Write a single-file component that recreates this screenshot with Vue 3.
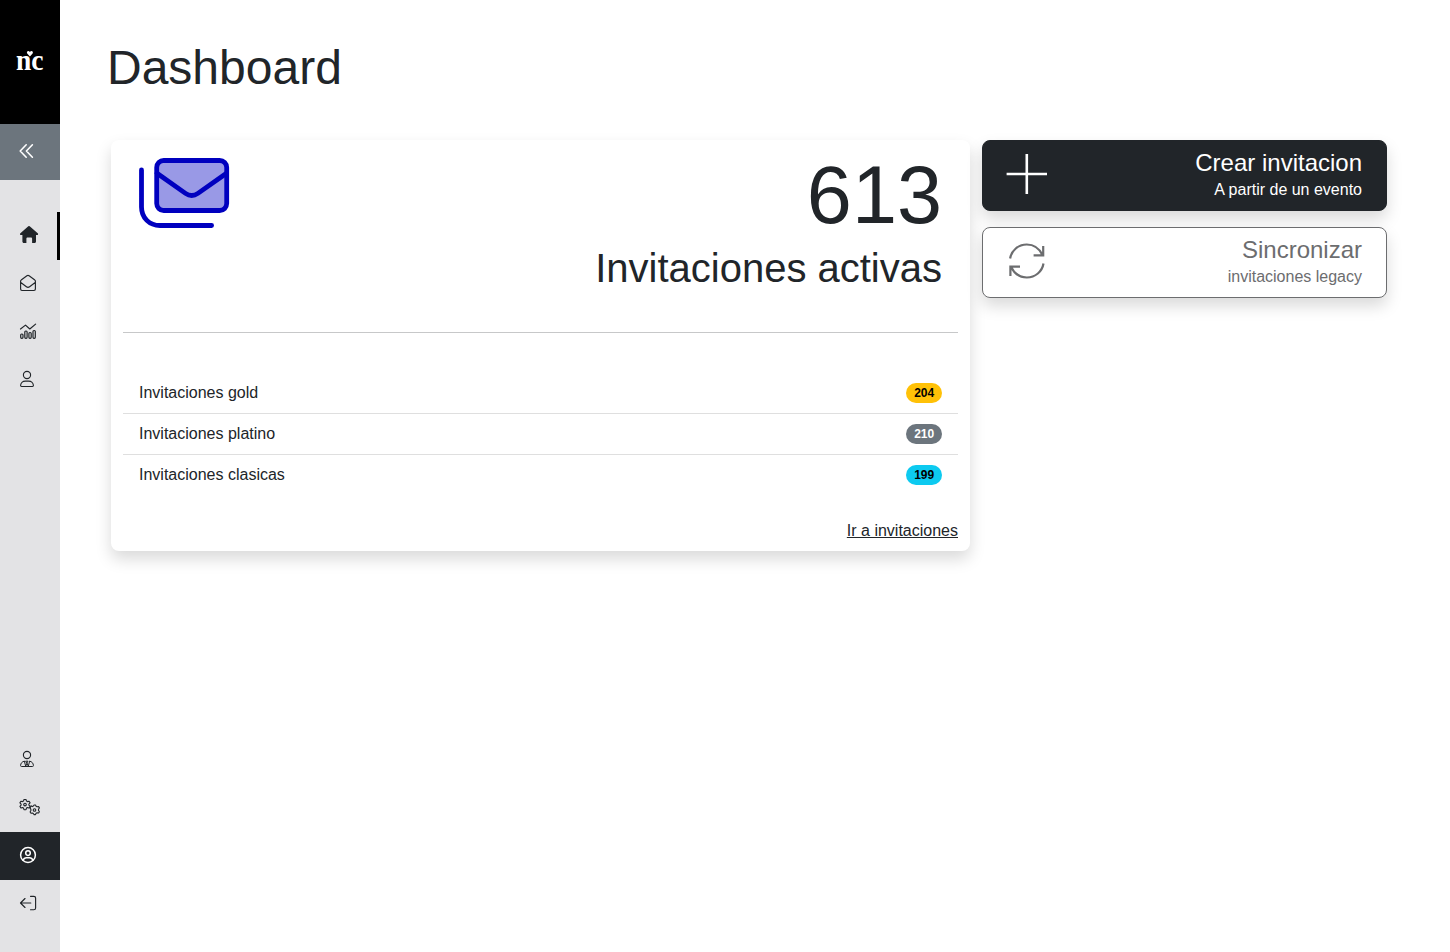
<script setup>
const plans = [
  { name: 'Invitaciones gold', count: 204, tone: 'gold' },
  { name: 'Invitaciones platino', count: 210, tone: 'platinum' },
  { name: 'Invitaciones clasicas', count: 199, tone: 'classic' },
]
</script>

<template>
  <div class="layout">
    <aside class="sidebar">
      <div class="logo">
        <svg width="60" height="124" viewBox="0 0 60 124">
          <text x="16" y="70" textLength="27.5" lengthAdjust="spacingAndGlyphs">nc</text>
          <path d="M29.900 56.400 L27.200 53.600 C26 51.200 28.600 50 29.900 51.900 C31.200 50 33.800 51.200 32.600 53.600 Z" />
        </svg>
      </div>
      <button class="toggle" aria-label="Contraer">
        <svg class="icon" viewBox="0 0 24 24" stroke-width="1.6"><path d="M10.200 4.800 4.200 11l6 6.200M16.400 4.800 10.400 11l6 6.200" /></svg>
      </button>
      <nav class="menu">
        <a class="item current">
          <svg class="icon solid" viewBox="0 0 24 24"><path d="M12.300 3.200a1.100 1.100 0 0 1 1.400 0l8 7c.8.7.4 1.900-.7 1.900h-1v6.400c0 .9-.6 1.500-1.500 1.500h-2.400v-4.400c0-.7-.5-1.200-1.200-1.200h-3.300c-.7 0-1.200.5-1.200 1.200V20H7.900c-.9 0-1.500-.6-1.500-1.500v-6.400h-1.300c-1.100 0-1.500-1.200-.7-1.900z" /></svg>
        </a>
        <a class="item">
          <svg class="icon" viewBox="0 0 24 24"><path d="M4.600 10.200q0-.8.6-1.200l5.700-4.200q1.100-.8 2.200 0L18.800 9q.6.400.6 1.200v7.900q0 1.400-1.400 1.400H6q-1.400 0-1.400-1.400zM4.800 11.500l5.600 4.200q1.600 1.200 3.200 0l5.600-4.200" /></svg>
        </a>
        <a class="item">
          <svg class="icon chart" viewBox="0 0 24 24"><path d="m4.500 10 5-3.900 4.300 3.900 5.800-4.900" /><rect x="4.700" y="15" width="2.300" height="4.300" rx="1" /><rect x="8.800" y="12" width="2.300" height="7.300" rx="1" /><rect x="12.900" y="13.500" width="2.300" height="5.800" rx="1" /><rect x="17" y="11.500" width="2.300" height="7.800" rx="1" /></svg>
        </a>
        <a class="item">
          <svg class="icon" viewBox="0 0 24 24"><circle cx="11" cy="8" r="3.600" /><path d="M4.600 18.600c0-2.700 2.100-4.500 4.800-4.500h3.200c2.700 0 4.800 1.800 4.800 4.500q0 .9-.9.900h-11q-.9 0-.9-.9z" /></svg>
        </a>
      </nav>
      <nav class="menu bottom">
        <a class="item">
          <svg class="icon" viewBox="0 0 24 24"><circle cx="11" cy="8" r="3.600" /><path d="M8.200 14.200c-2.100.3-3.600 2.100-3.600 4.400q0 .9.900.9h11q.9 0 .9-.9c0-2.300-1.500-4.100-3.600-4.400M8.400 14.400l1.300 4.800 1.300-3 1.300 3 1.300-4.800M10 14.200h2l-1 1.600z" stroke-width="1" /></svg>
        </a>
        <a class="item">
          <svg class="icon gears" viewBox="0 0 24 24">
            <path d="M8 4.500h2l.5 1.600 1 .5 1.600-.4 1 1.700-1.200 1.200v1l1.200 1.200-1 1.700-1.600-.4-1 .5-.5 1.600H8l-.5-1.600-1-.5-1.600.4-1-1.700L5.100 10.100v-1L3.900 7.900l1-1.700 1.600.4 1-.5z" /><circle cx="9" cy="9.600" r="1.300" />
            <path d="M15.500 10.900l1.300.9 1-.5.800-1.100h1.400l.6 1.300 1 .5 1.500-.2.800 1.300-.9 1.300v1.200l.9 1.300-.8 1.300-1.500-.2-1 .5-.6 1.300h-1.400l-.8-1.100-1-.5-1.300.3-.9-1.300.8-1.400v-1.200l-.8-1.300z" transform="translate(-.5 -.2)" /><circle cx="18.500" cy="15" r="1.300" />
          </svg>
        </a>
        <a class="item account">
          <svg class="icon" viewBox="0 0 24 24"><circle cx="12" cy="12" r="7.400" /><circle cx="12" cy="10.100" r="2.300" /><path d="M7.100 17.200c.6-1.700 1.800-2.500 3.400-2.500h3c1.600 0 2.800.8 3.400 2.500" /></svg>
        </a>
        <a class="item">
          <svg class="icon" viewBox="0 0 24 24"><path d="M14.800 12H4.800M9 7.500 4.500 12 9 16.500M14.500 5.300h3.300q1.800 0 1.800 1.800v9.800q0 1.800-1.800 1.800h-3.300" /></svg>
        </a>
      </nav>
    </aside>

    <main class="page">
      <h1>Dashboard</h1>
      <div class="columns">
        <section class="card">
          <header class="summary">
            <svg class="envelopes" width="92" height="72" viewBox="138 157 92 72">
              <rect x="156.700" y="160.500" width="70" height="50" rx="7" />
              <path d="m157 173.200 28.500 20.200q6.200 4.300 12.400 0L226.500 173.200M141.500 170v37c0 11 8 18.500 18.500 18.500h51.600" />
            </svg>
            <div class="figures">
              <div class="total">613</div>
              <div class="caption">Invitaciones activas</div>
            </div>
          </header>
          <hr />
          <ul>
            <li v-for="plan in plans" :key="plan.name">
              <span>{{ plan.name }}</span>
              <span class="badge" :class="plan.tone">{{ plan.count }}</span>
            </li>
          </ul>
          <a class="more">Ir a invitaciones</a>
        </section>
        <div class="actions">
          <button class="action dark">
            <svg width="42" height="42" viewBox="0 0 42 42" stroke-width="2.600"><path d="M20.800 1v40M.6 21h40.400" /></svg>
            <span class="label"><span class="title">Crear invitacion</span><span>A partir de un evento</span></span>
          </button>
          <button class="action outline">
            <svg width="42" height="42" viewBox="0 0 42 42" stroke-width="2.200"><path d="M4.100 18.500C5.400 10.500 12.300 4.500 20.800 4.500c7 0 12.500 4 15.700 10.500M37.200 6v9.400h-9.600M37.500 23.500C36.200 31.500 29.300 37.500 20.800 37.500c-7 0-12.500-4-15.700-10.500M4.400 36v-9.400h9.600" /></svg>
            <span class="label"><span class="title">Sincronizar</span><span>invitaciones legacy</span></span>
          </button>
        </div>
      </div>
    </main>
  </div>
</template>

<style>
body { background: #fff; }
</style>

<style scoped>
* { box-sizing: border-box; }
.layout {
  display: flex;
  height: 952px;
  overflow: hidden;
  font: 16px/24px "Liberation Sans", Arial, sans-serif;
  color: #212529;
}
.sidebar { width: 60px; flex: none; display: flex; flex-direction: column; background: #e3e3e5; padding-bottom: 24px; }
.logo { height: 124px; background: #000; }
.logo svg { display: block; }
.logo text { font: bold 29px "Liberation Serif", serif; fill: #fff; }
.logo path { fill: #fff; }
.toggle { height: 56px; border: 0; background: #6c757d; color: #fff; padding: 0 0 0 16px; text-align: left; }
.icon { display: block; width: 24px; height: 24px; fill: none; stroke: currentColor; stroke-linecap: round; stroke-linejoin: round; overflow: visible; }
.item .icon { stroke-width: 1.15; }
.item .solid { fill: currentColor; stroke: none; }
.item .chart { stroke-width: 1.2; }
.item .gears { stroke-width: 1.1; }
.menu { padding-top: 32px; }
.bottom { margin-top: auto; padding: 0; }
.item { display: flex; align-items: center; height: 48px; padding: 0 0 2px 16px; color: #212529; }
.current { border-right: 3px solid #000; padding-left: 15.5px; }
.account { background: #212529; color: #fff; }
.item.account .icon { stroke-width: 1.5; }
.page { flex: 1; padding: 39px 63px 0 51px; }
h1 { margin: 0 0 0 -4px; font-size: 48px; line-height: 58px; font-weight: 400; }
.columns { display: flex; align-items: flex-start; gap: 12px; margin-top: 43px; }
.card { width: 859px; height: 411px; padding: 12px; border-radius: 8px; background: #fff; box-shadow: 0 8px 16px rgba(0, 0, 0, .15); display: flex; flex-direction: column; }
.summary { display: flex; justify-content: space-between; padding: 5px 16px 0 15px; height: 180px; }
.envelopes { fill: #9999e6; stroke: #0000bf; stroke-width: 4.800; stroke-linecap: round; stroke-linejoin: round; }
.envelopes path { fill: none; }
.figures { text-align: right; }
.total { font-size: 81px; line-height: 80px; margin-top: -2px; }
.caption { font-size: 40px; line-height: 48px; margin-top: 9px; }
hr { width: 100%; margin: 0; border: 0; border-top: 1px solid #c7c8c9; }
ul { list-style: none; margin: 40px 0 0; padding: 0; }
li { display: flex; align-items: center; justify-content: space-between; height: 41px; padding: 0 16px; border-bottom: 1px solid #dfdfdf; }
li:last-child { border-bottom: 0; height: 40px; }
.badge { padding: 4.200px 7.800px; border-radius: 20px; font-size: 12px; line-height: 12px; font-weight: 700; }
.gold { background: #ffc107; color: #000; }
.platinum { background: #6c757d; color: #fff; }
.classic { background: #0dcaf0; color: #000; }
.more { margin-top: auto; align-self: flex-end; text-decoration: underline; margin-bottom: -4px; }
.actions { flex: 1; display: flex; flex-direction: column; gap: 16px; }
.action { display: flex; justify-content: space-between; align-items: flex-start; height: 71px; padding: 7px 24px 0 23px; border: 1px solid #212529; border-radius: 8px; font: inherit; box-shadow: 0 8px 16px rgba(0, 0, 0, .15); }
.action svg { fill: none; stroke: currentColor; stroke-linejoin: miter; margin-top: 5px; }
.dark { background: #212529; color: #fff; }
.outline { background: #fff; color: #6c6d6f; border-color: #6c6d6f; }
.label { display: flex; flex-direction: column; text-align: right; }
.title { font-size: 24px; line-height: 29px; margin-bottom: 1px; }
</style>
